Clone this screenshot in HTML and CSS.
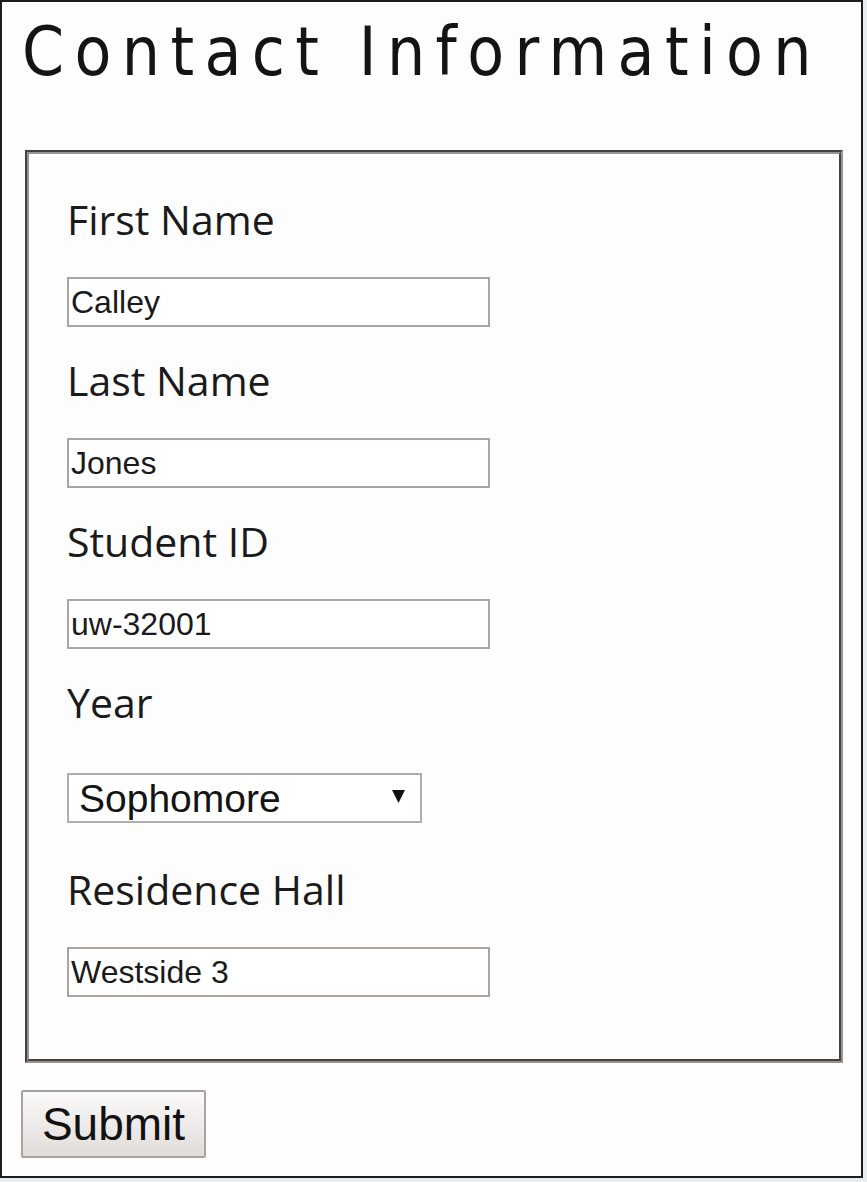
FILE: index.html
```html
<!DOCTYPE html>
<html lang="en">
<head>
<meta charset="utf-8">
<title>Contact Information</title>
<link rel="stylesheet" href="styles.css">
</head>
<body>
<div class="page">
  <h1 class="title">Contact Information</h1>
  <form class="form">
    <fieldset class="fields">
      <div class="field">
        <label class="label" for="first">First Name</label>
        <input class="text" id="first" type="text" value="Calley">
      </div>
      <div class="field">
        <label class="label" for="last">Last Name</label>
        <input class="text" id="last" type="text" value="Jones">
      </div>
      <div class="field">
        <label class="label" for="sid">Student ID</label>
        <input class="text" id="sid" type="text" value="uw-32001">
      </div>
      <div class="field field-select">
        <label class="label" for="year">Year</label>
        <div class="select-wrap">
          <select class="select" id="year">
            <option>Freshman</option>
            <option selected>Sophomore</option>
            <option>Junior</option>
            <option>Senior</option>
          </select>
          <svg class="arrow" width="13" height="13" viewBox="0 0 13 13" aria-hidden="true"><polygon points="0,0 13,0 6.5,13" fill="#111"/></svg>
        </div>
      </div>
      <div class="field">
        <label class="label" for="hall">Residence Hall</label>
        <input class="text" id="hall" type="text" value="Westside 3">
      </div>
    </fieldset>
    <button class="submit" type="submit">Submit</button>
  </form>
</div>
</body>
</html>
```
FILE: styles.css
```css
html, body {
  margin: 0;
  padding: 0;
  background: #e8ecef;
}

.page {
  box-sizing: border-box;
  width: 863px;
  height: 1178px;
  border: 2px solid #1c1c1c;
  background: #fefdfd;
  padding: 0 18px 0 19px;
}

.title {
  margin: 16px 0 64px 0;
  padding-left: 1px;
  font-family: "DejaVu Sans Condensed", "DejaVu Sans", sans-serif;
  font-stretch: condensed;
  font-weight: 400;
  font-size: 67px;
  line-height: 68px;
  letter-spacing: 10.4px;
  color: #141414;
  white-space: nowrap;
}

.form {
  margin: 0;
}

.fields {
  margin: 0 0 0 4px;
  padding: 44px 40px 62px 38px;
  border: 4px groove #9a928e;
  min-width: 0;
  display: flex;
  flex-direction: column;
  gap: 32px;
}

.field {
  display: flex;
  flex-direction: column;
  align-items: flex-start;
}

.label {
  font-family: "Open Sans", "DejaVu Sans", sans-serif;
  font-size: 41px;
  line-height: 42px;
  color: #1a1a1a;
  margin-bottom: 37px;
}

.field-select .label {
  margin-bottom: 50px;
}

.field-select {
  margin-bottom: 13px;
}

.text {
  box-sizing: border-box;
  width: 423px;
  height: 50px;
  margin: 0;
  border: 2px solid #aca4a0;
  padding: 0 2px;
  background: #fff;
  font-family: "Liberation Sans", Arial, sans-serif;
  font-size: 32px;
  color: #1a1a1a;
  outline: none;
}

.select-wrap {
  position: relative;
  width: 355px;
  height: 50px;
}

.select {
  -webkit-appearance: none;
  appearance: none;
  box-sizing: border-box;
  width: 355px;
  height: 50px;
  margin: 0;
  border: 2px solid #b3aca8;
  border-radius: 0;
  padding: 0 0 0 10px;
  background: #fff;
  font-family: "Liberation Sans", Arial, sans-serif;
  font-size: 39px;
  color: #141414;
  outline: none;
}

.arrow {
  position: absolute;
  right: 17px;
  top: 17px;
  pointer-events: none;
}

.submit {
  box-sizing: border-box;
  display: block;
  margin: 27px 0 0 0;
  width: 185px;
  height: 68px;
  padding: 0;
  border: 2px solid #a9a29e;
  border-radius: 2px;
  background: linear-gradient(#fbfafa, #e0dcda);
  font-family: "Liberation Sans", Arial, sans-serif;
  font-size: 46px;
  color: #121212;
}
```
